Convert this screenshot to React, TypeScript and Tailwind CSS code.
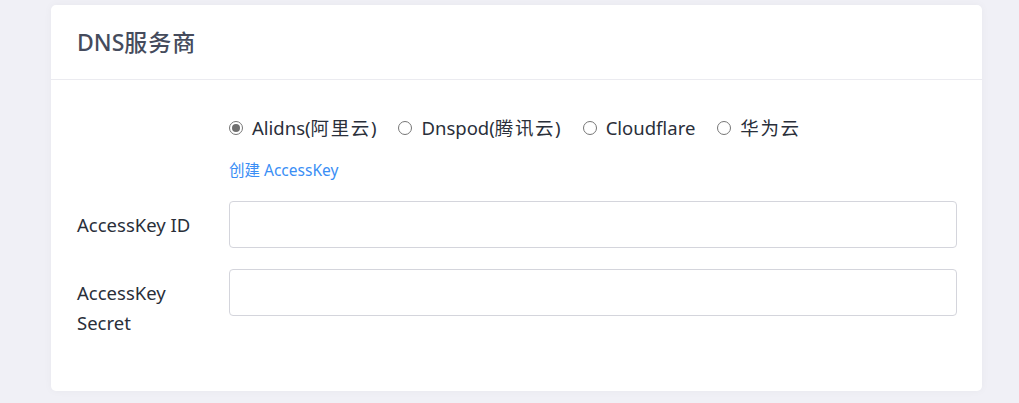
import React, { useState } from "react";

const font = { fontFamily: '"Noto Sans", "Noto Sans CJK SC", sans-serif' };

export default function App() {
  const [provider, setProvider] = useState("aliyun");
  const options = [
    { id: "aliyun", latin: "Alidns(", cjk: "阿里云", tail: ")" },
    { id: "tencent", latin: "Dnspod(", cjk: "腾讯云", tail: ")" },
    { id: "cf", latin: "Cloudflare", cjk: "", tail: "" },
    { id: "huawei", latin: "", cjk: "华为云", tail: "" },
  ];
  return (
    <div className="min-h-[403px] w-full bg-[#f0f0f6] pt-[5px] pl-[51px] pr-[37px] pb-[12px]" style={font}>
      <div className="rounded-[5px] bg-white shadow-[0_0_8px_rgba(0,0,0,0.04)]">
        <div className="flex h-[75px] items-center border-b border-[#ebebf0] px-[26px]">
          <h2 className="text-[23px] font-medium text-[#454b5c]">
            DNS<span className="tracking-[1px]">服务商</span>
          </h2>
        </div>
        <div className="pl-[26px] pr-[25px] pt-[33px] pb-[53px] text-[#2a2f3a]">
          <div className="grid grid-cols-[152px_1fr]">
            <div />
            <div>
              <div className="flex h-[30px] items-center gap-[22px] text-[18.5px] leading-[30px]">
                {options.map((o) => (
                  <label key={o.id} className="flex cursor-pointer items-center gap-[9px]">
                    <span
                      className="flex h-[14px] w-[14px] items-center justify-center rounded-full border border-[#767676] bg-white"
                      onClick={() => setProvider(o.id)}
                    >
                      {provider === o.id && <span className="h-[8px] w-[8px] rounded-full bg-[#6e6e6e]" />}
                    </span>
                    <span onClick={() => setProvider(o.id)}>
                      {o.latin}
                      {o.cjk && <span className="tracking-[1.6px]">{o.cjk}</span>}
                      {o.tail}
                    </span>
                  </label>
                ))}
              </div>
              <a className="mt-[16px] block text-[15.5px] leading-[22px] text-[#3a8ef5]" href="#">
                创建 AccessKey
              </a>
            </div>
          </div>
          <div className="mt-[20px] grid grid-cols-[152px_1fr] items-center">
            <label className="text-[18.5px] leading-[30px]">AccessKey ID</label>
            <input className="h-[47px] w-full rounded-[4px] border border-[#d4d5dc] px-3 outline-none" />
          </div>
          <div className="mt-[21px] grid grid-cols-[152px_1fr] items-start">
            <label className="mt-[9px] text-[18.5px] leading-[30px]">
              AccessKey
              <br />
              Secret
            </label>
            <input className="h-[47px] w-full rounded-[4px] border border-[#d4d5dc] px-3 outline-none" />
          </div>
        </div>
      </div>
    </div>
  );
}
